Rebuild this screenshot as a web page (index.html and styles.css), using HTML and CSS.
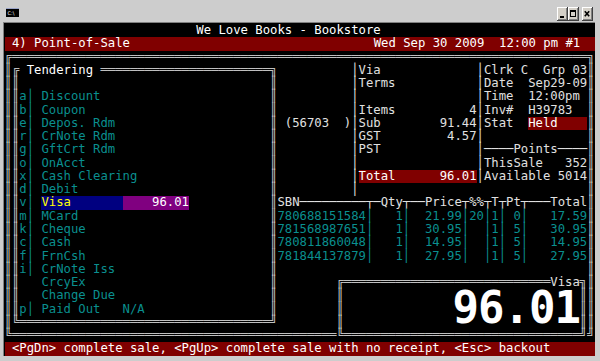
FILE: index.html
```html
<!DOCTYPE html>
<html>
<head>
<meta charset="utf-8">
<title>We Love Books - Bookstore</title>
<link rel="stylesheet" href="styles.css">
</head>
<body>
<div class="window">
  <div class="titlebar">
    <svg class="appicon" viewBox="0 0 13 9"><rect width="13" height="9" fill="#000"/><rect width="13" height="1" fill="#9aa4c8"/><text x="1.5" y="7" class="icontext">C:\</text></svg>
    <div class="winbtns">
      <svg class="btn" viewBox="0 0 11 14"><rect width="11" height="14" fill="#404040"/><rect width="10" height="13" fill="#fff"/><rect x="1" y="1" width="9" height="12" fill="#808080"/><rect x="1" y="1" width="8" height="11" fill="#d4d0c8"/><rect x="3" y="9" width="4" height="2" fill="#000"/></svg>
      <svg class="btn" viewBox="0 0 11 14"><rect width="11" height="14" fill="#404040"/><rect width="10" height="13" fill="#fff"/><rect x="1" y="1" width="9" height="12" fill="#808080"/><rect x="1" y="1" width="8" height="11" fill="#d4d0c8"/><rect x="2.5" y="3.5" width="5" height="6" fill="none" stroke="#000"/><rect x="2" y="3" width="6" height="2" fill="#000"/></svg>
      <svg class="btn close" viewBox="0 0 11 14"><rect width="11" height="14" fill="#404040"/><rect width="10" height="13" fill="#fff"/><rect x="1" y="1" width="9" height="12" fill="#808080"/><rect x="1" y="1" width="8" height="11" fill="#d4d0c8"/><path d="M2.8 4.2 L7.2 9.2 M7.2 4.2 L2.8 9.2" stroke="#000" stroke-width="1.6"/></svg>
    </div>
  </div>
  <div class="console">
<div class="row title">We Love Books - Bookstore</div>
<div class="row bar"><span>4) Point-of-Sale</span><span>Wed Sep 30 2009  12:00 pm #1</span></div>
<div class="row f">╔══════════════════════════════════════════════════════════════════════════════╗</div>
<div class="row"><span class="f">║╔</span><span class="b"> Tendering </span><span class="f">═══════════════════════╗</span><span class="c k10"></span><span class="w">│</span><span class="c k16 w">Via</span><span class="w">│</span><span class="c k14 w">Clrk C  Grp 03</span><span class="f">║</span></div>
<div class="row"><span class="f">║║</span><span class="c k34"></span><span class="f">║</span><span class="c k10"></span><span class="w">│</span><span class="c k16 w">Terms</span><span class="w">│</span><span class="c k14 w">Date  Sep29-09</span><span class="f">║</span></div>
<div class="row"><span class="f">║║</span><span class="c k34 t">a│ Discount</span><span class="f">║</span><span class="c k10"></span><span class="w">│</span><span class="c k16"></span><span class="w">│</span><span class="c k14 w">Time  12:00pm</span><span class="f">║</span></div>
<div class="row"><span class="f">║║</span><span class="c k34 t">b│ Coupon</span><span class="f">║</span><span class="c k10"></span><span class="w">│</span><span class="c k16 w lr"><span>Items</span><span>4</span></span><span class="w">│</span><span class="c k14 w">Inv#  H39783</span><span class="f">║</span></div>
<div class="row"><span class="f">║║</span><span class="c k34 t">e│ Depos. Rdm</span><span class="f">║</span><span class="c k10 w"> (56703  )</span><span class="w">│</span><span class="c k16 w lr"><span>Sub</span><span>91.44</span></span><span class="w">│</span><span class="c k14 w">Stat  <span class="held">Held</span></span><span class="f">║</span></div>
<div class="row"><span class="f">║║</span><span class="c k34 t">r│ CrNote Rdm</span><span class="f">║</span><span class="c k10"></span><span class="w">│</span><span class="c k16 w lr"><span>GST</span><span>4.57</span></span><span class="w">│</span><span class="c k14"></span><span class="f">║</span></div>
<div class="row"><span class="f">║║</span><span class="c k34 t">g│ GftCrt Rdm</span><span class="f">║</span><span class="c k10"></span><span class="w">│</span><span class="c k16 w">PST</span><span class="w">│</span><span class="c k14 w">────Points────</span><span class="f">║</span></div>
<div class="row"><span class="f">║║</span><span class="c k34 t">o│ OnAcct</span><span class="f">║</span><span class="c k10"></span><span class="w">│</span><span class="c k16"></span><span class="w">│</span><span class="c k14 w lr"><span>ThisSale</span><span>352</span></span><span class="f">║</span></div>
<div class="row"><span class="f">║║</span><span class="c k34 t">x│ Cash Clearing</span><span class="f">║</span><span class="c k10"></span><span class="w">│</span><span class="c k16 lr total"><span>Total</span><span>96.01</span></span><span class="w">│</span><span class="c k14 w lr"><span>Available</span><span>5014</span></span><span class="f">║</span></div>
<div class="row"><span class="f">║║</span><span class="c k34 t">d│ Debit</span><span class="f">║</span><span class="c k10"></span><span class="w">│</span><span class="c k31"></span><span class="f">║</span></div>
<div class="row"><span class="f">║║</span><span class="c k34 t">v│ <span class="sel-name">Visa</span><span class="sel-amt">96.01</span></span><span class="f">║</span><span class="c k42 w">SBN─────────┬─Qty┬──Price┬%%┬T┬Pt┬───Total</span><span class="f">║</span></div>
<div class="row"><span class="f">║║</span><span class="c k34 t">m│ MCard</span><span class="f">║</span><span class="c k42 t">780688151584│   1│  21.99│20│1│ 0│   17.59</span><span class="f">║</span></div>
<div class="row"><span class="f">║║</span><span class="c k34 t">k│ Cheque</span><span class="f">║</span><span class="c k42 t">781568987651│   1│  30.95│  │1│ 5│   30.95</span><span class="f">║</span></div>
<div class="row"><span class="f">║║</span><span class="c k34 t">c│ Cash</span><span class="f">║</span><span class="c k42 t">780811860048│   1│  14.95│  │1│ 5│   14.95</span><span class="f">║</span></div>
<div class="row"><span class="f">║║</span><span class="c k34 t">f│ FrnCsh</span><span class="f">║</span><span class="c k42 t">781844137879│   1│  27.95│  │1│ 5│   27.95</span><span class="f">║</span></div>
<div class="row"><span class="f">║║</span><span class="c k34 t">i│ CrNote Iss</span><span class="f">║</span><span class="c k42"></span><span class="f">║</span></div>
<div class="row"><span class="f">║║</span><span class="c k34 t">   CrcyEx</span><span class="f">║</span><span class="c k8"></span><span class="f">╔════════════════════════════</span><span class="w">Visa</span><span class="f">╗║</span></div>
<div class="row"><span class="f">║║</span><span class="c k34 t">   Change Due</span><span class="f">║</span><span class="c k8"></span><span class="f">║</span><span class="c k32"></span><span class="f">║║</span></div>
<div class="row"><span class="f">║║</span><span class="c k34 t">p│ Paid Out   N/A</span><span class="f">║</span><span class="c k8"></span><span class="f">║</span><span class="c k32"></span><span class="f">║║</span></div>
<div class="row"><span class="f">║╚══════════════════════════════════╝</span><span class="c k8"></span><span class="f">║</span><span class="c k32"></span><span class="f">║║</span></div>
<div class="row f">╚════════════════════════════════════════════╚════════════════════════════════╝╝</div>
<div class="row bar"><span>&lt;PgDn&gt; complete sale, &lt;PgUp&gt; complete sale with no receipt, &lt;Esc&gt; backout</span></div>
    <div class="bignum">96.01</div>
  </div>
</div>
</body>
</html>
```
FILE: styles.css
```css
html, body {
  margin: 0;
  padding: 0;
  background: #cdcdcd;
}

.window {
  width: 600px;
  height: 361px;
  background: #cdcdcd;
  overflow: hidden;
}

.titlebar {
  height: 22px;
  box-sizing: border-box;
  display: flex;
  justify-content: space-between;
  align-items: flex-start;
  padding: 8px 7px 0 6px;
}

.appicon {
  width: 13px;
  height: 9px;
  display: block;
}

.icontext {
  font-family: "DejaVu Sans", sans-serif;
  font-size: 5px;
  fill: #fff;
}

.winbtns {
  display: flex;
  margin-top: -1px;
}

.btn {
  display: block;
  width: 11px;
  height: 14px;
}

.btn.close {
  margin-left: 3px;
}

.console {
  position: relative;
  margin-left: 3px;
  width: 590.4px;
  padding: 1px 0.6px 0 0.5px;
  border-top: 1px solid #808080;
  border-left: 1px solid #808080;
  background: #000;
  font-family: "DejaVu Sans Mono", monospace;
  font-size: 12.26px;
  line-height: 13.28px;
  color: #c0c0c0;
}

.row {
  height: 13.28px;
  white-space: pre;
}

.title {
  color: #fff;
  padding-left: 26ch;
}

.bar {
  display: flex;
  justify-content: space-between;
  background: #800000;
  color: #fff;
  padding: 0 2ch 0 1ch;
}

.f { color: #c0c0c0; }
.w { color: #e0e0e0; }
.b { color: #ffffff; }
.t { color: #0a8f8f; }

.c {
  display: inline-block;
  vertical-align: top;
}

.k8 { width: 8ch; }
.k10 { width: 10ch; }
.k14 { width: 14ch; }
.k16 { width: 16ch; }
.k31 { width: 31ch; }
.k32 { width: 32ch; }
.k34 { width: 34ch; }
.k42 { width: 42ch; }

.lr {
  display: inline-flex;
  justify-content: space-between;
}

.total {
  background: #800000;
  color: #fff;
}

.held {
  display: inline-block;
  vertical-align: top;
  width: 8ch;
  background: #800000;
  color: #fff;
}

.sel-name {
  display: inline-block;
  vertical-align: top;
  width: 11ch;
  background: #000080;
  color: #ffff00;
}

.sel-amt {
  display: inline-block;
  vertical-align: top;
  width: 9ch;
  text-align: right;
  background: #800080;
  color: #fff;
}

.bignum {
  position: absolute;
  left: 448.5px;
  top: 266.8px;
  font-family: "DejaVu Sans Mono", monospace;
  font-weight: bold;
  font-size: 44px;
  line-height: 36px;
  letter-spacing: -1px;
  color: #fff;
}
```
